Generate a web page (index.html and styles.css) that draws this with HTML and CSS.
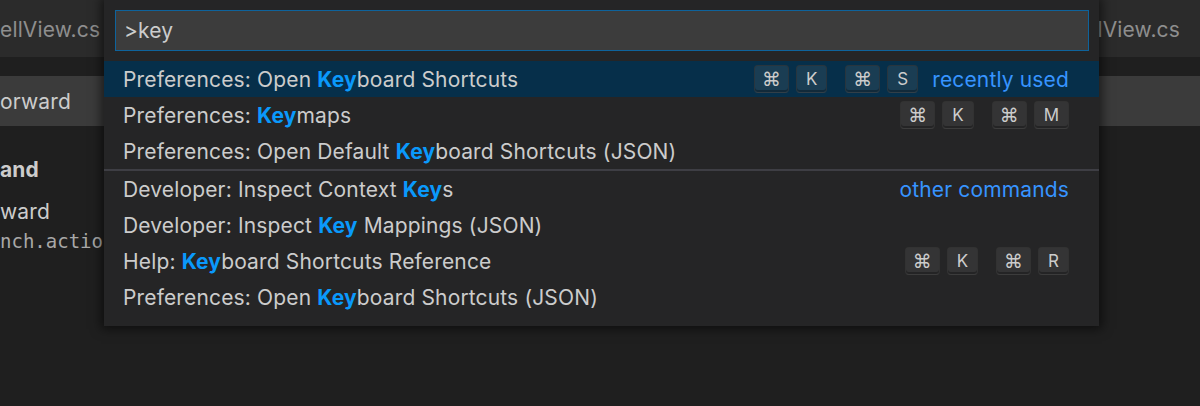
FILE: index.html
```html
<!DOCTYPE html>
<html lang="en">
<head>
    <meta charset="UTF-8">
    <meta name="viewport" content="width=device-width, initial-scale=1.0">
    <title>Command Palette</title>
    <link rel="stylesheet" href="styles.css">
</head>
<body>

<div class="editor">
    <div class="tabs">
        <span class="tab">ellView.cs</span>
        <span class="tab">CellView.cs</span>
    </div>

    <div class="search-row">
        <div class="search-box">orward</div>
    </div>

    <div class="table">
        <div class="table-head">and</div>
        <div class="table-row">
            <div class="cmd-title">ward</div>
            <div class="cmd-id">nch.action</div>
        </div>
    </div>
</div>

<div class="quick-open">
    <div class="quick-input">&gt;key</div>

    <div class="picks">
        <div class="pick focused">
            <span class="pick-label">Preferences: Open <b>Key</b>board Shortcuts</span>
            <span class="pick-meta">
                <span class="chord"><kbd class="cmd">⌘</kbd><kbd>K</kbd></span>
                <span class="chord"><kbd class="cmd">⌘</kbd><kbd>S</kbd></span>
                <span class="pick-desc">recently used</span>
            </span>
        </div>
        <div class="pick">
            <span class="pick-label">Preferences: <b>Key</b>maps</span>
            <span class="pick-meta">
                <span class="chord"><kbd class="cmd">⌘</kbd><kbd>K</kbd></span>
                <span class="chord"><kbd class="cmd">⌘</kbd><kbd>M</kbd></span>
            </span>
        </div>
        <div class="pick">
            <span class="pick-label">Preferences: Open Default <b>Key</b>board Shortcuts (JSON)</span>
        </div>

        <div class="separator"></div>

        <div class="pick">
            <span class="pick-label">Developer: Inspect Context <b>Key</b>s</span>
            <span class="pick-meta">
                <span class="pick-desc">other commands</span>
            </span>
        </div>
        <div class="pick">
            <span class="pick-label">Developer: Inspect <b>Key</b> Mappings (JSON)</span>
        </div>
        <div class="pick">
            <span class="pick-label">Help: <b>Key</b>board Shortcuts Reference</span>
            <span class="pick-meta">
                <span class="chord"><kbd class="cmd">⌘</kbd><kbd>K</kbd></span>
                <span class="chord"><kbd class="cmd">⌘</kbd><kbd>R</kbd></span>
            </span>
        </div>
        <div class="pick">
            <span class="pick-label">Preferences: Open <b>Key</b>board Shortcuts (JSON)</span>
        </div>
    </div>
</div>

</body>
</html>
```

FILE: styles.css
```css
body {
    margin: 0;
    height: 406px;
    overflow: hidden;
    background-color: #1f1f1f;
    font-family: Inter, 'Noto Sans', sans-serif;
    font-size: 21px;
    letter-spacing: 0.15px;
    color: #cccccc;
    position: relative;
}

/* editor underneath the palette */

.editor {
    display: flex;
    flex-direction: column;
}

.tabs {
    height: 57px;
    background-color: #2b2b2b;
    display: flex;
    justify-content: space-between;
    align-items: center;
    padding-right: 20px;
}

.tab {
    color: #8e8e8e;
    padding-top: 2px;
}

.search-row {
    padding-top: 19px;
}

.search-box {
    height: 50px;
    background-color: #3b3b3b;
    display: flex;
    align-items: center;
}

.table {
    padding-top: 29px;
}

.table-head {
    font-weight: 700;
    height: 30px;
    line-height: 30px;
}

.table-row {
    padding-top: 14px;
}

.cmd-title {
    line-height: 26px;
}

.cmd-id {
    font-family: 'DejaVu Sans Mono', monospace;
    font-size: 19px;
    letter-spacing: 0;
    color: #a8a8a8;
    line-height: 32px;
}

/* quick open widget */

.quick-open {
    position: absolute;
    left: 104px;
    top: 0;
    width: 995px;
    height: 326px;
    box-sizing: border-box;
    padding-top: 10px;
    background-color: #252526;
    box-shadow: 0 0 10px 3px rgba(0, 0, 0, 0.55);
}

.quick-input {
    margin: 0 10px 10px 11px;
    height: 41px;
    box-sizing: border-box;
    border: 1px solid #0e639c;
    background-color: #3c3c3c;
    padding-left: 8px;
    display: flex;
    align-items: center;
}

.pick {
    height: 36px;
    padding: 0 30px 0 19px;
    display: flex;
    justify-content: space-between;
    align-items: center;
    white-space: nowrap;
}

.pick.focused {
    background-color: #062f4a;
}

.pick-label {
    padding-top: 1px;
}

.pick-label b {
    color: #0a99fb;
    font-weight: 700;
}

.pick-meta {
    display: flex;
    align-items: center;
    gap: 18px;
}

.pick-desc {
    color: #3794ff;
    margin-left: -4px;
}

.chord {
    display: flex;
    gap: 7px;
}

kbd {
    font-family: Inter, 'DejaVu Sans', sans-serif;
    font-size: 17px;
    letter-spacing: 0;
    color: #cccccc;
    min-width: 14px;
    height: 28px;
    box-sizing: border-box;
    padding: 0 9px;
    display: flex;
    align-items: center;
    justify-content: center;
    border-radius: 4px;
    background-color: rgba(128, 128, 128, 0.17);
    border: 1px solid rgba(51, 51, 51, 0.6);
    border-bottom-color: rgba(68, 68, 68, 0.6);
    box-shadow: inset 0 -2px 0 rgba(0, 0, 0, 0.3);
}

kbd.cmd {
    font-family: 'DejaVu Sans', sans-serif;
    font-size: 19px;
    padding: 0 7px;
}

.separator {
    height: 2px;
    background-color: #3e3e44;
}
```
